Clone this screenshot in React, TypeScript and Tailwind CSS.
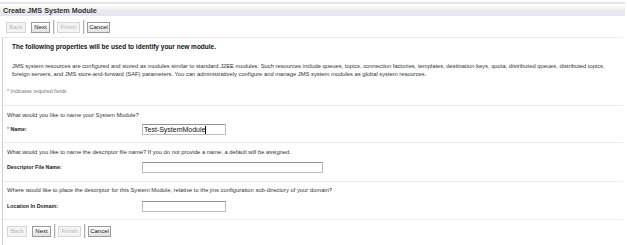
import React from "react"

function Btn({ label, disabled, cls }: { label: string; disabled?: boolean; cls: string }) {
  return (
    <span
      className={
        "flex h-[11px] items-center justify-center border text-[6px] leading-none " +
        cls +
        (disabled
          ? " border-[#d6d6d6] bg-[#f4f4f4] text-[#b9b9b9]"
          : " border-[#9a9a9a] bg-gradient-to-b from-[#ffffff] to-[#e2e2e2] text-[#1a1a1a]")
      }
    >
      {label}
    </span>
  )
}

function Sep() {
  return <span className="ml-[3px] h-[14px] w-[2px] border-l border-r border-l-[#b0b0b0] border-r-[#e8e8e8]" />
}

function Toolbar() {
  return (
    <div className="flex h-[14px] items-center text-[6px] leading-none">
      <Btn label="Back" disabled cls="w-[20px]" />
      <Btn label="Next" cls="ml-[5px] w-[19px]" />
      <Sep />
      <Btn label="Finish" disabled cls="ml-[2px] w-[23px]" />
      <Sep />
      <Btn label="Cancel" cls="ml-[2px] w-[23px]" />
    </div>
  )
}

function Field({ label, value, width }: { label: React.ReactNode; value?: string; width: string }) {
  return (
    <div className="flex h-[13px] items-center">
      <div className="w-[135px] text-[5.3px] font-bold text-[#222]">{label}</div>
      <div className={"h-[11px] border border-[#bcbcbc] border-t-[#939393] bg-white px-[1px] text-[7px] leading-[9px] text-[#111] " + width}>
        {value}
        {value && <span className="inline-block h-[8px] w-px bg-black align-middle" />}
      </div>
    </div>
  )
}

export default function App() {
  return (
    <div className="h-[245px] w-[627px] overflow-hidden bg-white text-[#222]" style={{ fontFamily: '"Liberation Sans", Arial, sans-serif' }}>
      <div className="pt-[2px]">
        <div className="h-[2px] w-[625px] bg-[#e4e3ec]" />
      </div>
      <div className="mt-[2px] flex h-[10px] w-[625px] items-center bg-gradient-to-b from-[#fbfbf5] via-[#eaeaef] to-[#e3e3ec] pl-[3px] text-[7.2px] font-bold text-[#333]">
        Create JMS System Module
      </div>
      <div className="pl-[6px] pt-[4px]">
        <Toolbar />
      </div>
      <div className="ml-[2px] mt-[3px] border-l border-[#cfcfcf] pb-[20px]">
        <div className="w-[620px] border-t border-[#ececec] pl-[9px] pt-[4px]">
          <div className="text-[6.5px] font-bold leading-[9px] text-[#111]">The following properties will be used to identify your new module.</div>
          <p className="mt-[11px] text-[5.8px] leading-[8px] text-[#333]">
            JMS system resources are configured and stored as modules similar to standard J2EE modules. Such resources include queues, topics, connection factories, templates, destination keys, quota, distributed queues, distributed topics, foreign servers, and JMS store-and-forward (SAF) parameters. You can administratively configure and manage JMS system modules as global system resources.
          </p>
        </div>
        <div className="mt-[9px] pl-[4px] text-[5.3px] leading-[8px] text-[#777]">* Indicates required fields</div>
        <div className="mt-[10px] w-[620px] border-t border-[#ececec] pl-[4px] pt-[5px]">
          <div className="text-[5.8px] leading-[8px] text-[#333]">What would you like to name your System Module?</div>
          <div className="mt-[4px]">
            <Field label={<><span className="font-normal text-[#333]">* </span>Name:</>} value="Test-SystemModule" width="w-[84px]" />
          </div>
        </div>
        <div className="mt-[6px] w-[620px] border-t border-[#ececec] pl-[4px] pt-[5px]">
          <div className="text-[5.8px] leading-[8px] text-[#333]">What would you like to name the descriptor file name? If you do not provide a name, a default will be assigned.</div>
          <div className="mt-[5px]">
            <Field label="Descriptor File Name:" width="w-[181px]" />
          </div>
        </div>
        <div className="mt-[7px] w-[620px] border-t border-[#ececec] pl-[4px] pt-[4px]">
          <div className="text-[5.8px] leading-[8px] text-[#333]">Where would like to place the descriptor for this System Module, relative to the jms configuration sub-directory of your domain?</div>
          <div className="mt-[6px]">
            <Field label="Location In Domain:" width="w-[84px]" />
          </div>
        </div>
        <div className="mt-[6px] w-[620px] border-t border-[#ececec] pl-[4px] pt-[4px]">
          <Toolbar />
        </div>
      </div>
    </div>
  )
}
